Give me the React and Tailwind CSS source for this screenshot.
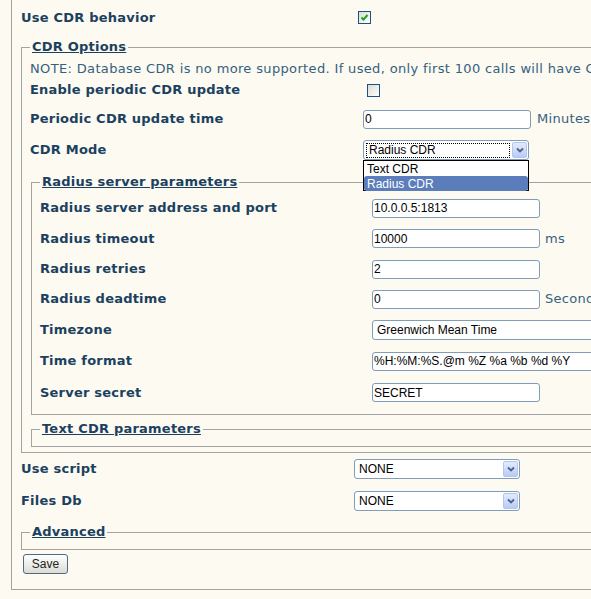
import React from "react";

const lbl = "font-bold text-[13px] tracking-[0.22px] text-[#1b4160]";
const unit = "text-[13px] tracking-[0.3px] text-[#35617f] whitespace-nowrap";

function Check({ checked }) {
  return (
    <span className="flex w-[13px] h-[13px] items-center justify-center border border-[#1c5180] bg-gradient-to-br from-[#dcdcd4] to-white">
      {checked && (
        <svg width="9" height="9" viewBox="0 0 9 9">
          <path d="M1.5 4.5 L3.5 6.5 L7.5 2" fill="none" stroke="#21a121" strokeWidth="2" />
        </svg>
      )}
    </span>
  );
}

function Input({ value, w = "w-[168px]" }) {
  return (
    <input
      readOnly
      defaultValue={value}
      className={`${w} h-[19px] rounded-[3px] border border-[#7f9db9] bg-white pl-[1px] text-[12px] text-black font-['Liberation_Sans',sans-serif] outline-none`}
    />
  );
}

function Select({ value, w = "w-[166px]", focused, children }) {
  return (
    <div className={`relative flex h-[20px] ${w} shrink-0 items-center rounded-[3px] border border-[#7f9db9] bg-white font-['Liberation_Sans',sans-serif] text-[12px] text-black`}>
      {focused ? (
        <span className="ml-[2px] mr-[2px] flex h-[15px] flex-1 items-center border border-dotted border-black pl-[2px]">
          {value}
        </span>
      ) : (
        <span className="flex-1 pl-[4px]">{value}</span>
      )}
      <span className="mr-[1px] flex h-[16px] w-[15px] items-center justify-center rounded-[2px] border border-[#b3c6ee] bg-gradient-to-b from-[#e3ebfd] to-[#b9cbf5]">
        <svg width="8" height="6" viewBox="0 0 8 6">
          <path d="M1 1.5 L4 4.5 L7 1.5" fill="none" stroke="#4d6185" strokeWidth="1.8" />
        </svg>
      </span>
      {children}
    </div>
  );
}

function Legend({ children }) {
  return (
    <legend className={`px-[2px] leading-[16px] underline ${lbl}`}>{children}</legend>
  );
}

function Row({ h, lw, label, children }) {
  return (
    <div className={`flex items-center ${h}`}>
      <div className={`${lw} shrink-0 ${lbl}`}>{label}</div>
      <div className="flex items-center">{children}</div>
    </div>
  );
}

export default function App() {
  return (
    <div className="h-[599px] w-[591px] overflow-hidden bg-[#fcfaf1] font-['DejaVu_Sans',sans-serif]">
      <div className="ml-[11px] w-[800px] border-b border-l border-[#a3a3a3] pb-[14px] pl-[9px] pt-[4px]">
        <Row h="h-[27px]" lw="w-[337px]" label="Use CDR behavior">
          <Check checked />
        </Row>

        {/* CDR Options */}
        <fieldset className="mt-[8px] border border-[#a3a3a3] pb-[5px] pl-[8px]">
          <Legend>CDR Options</Legend>
          <div className="pt-[6px]">
            <div className="whitespace-nowrap text-[13px] leading-[16px] tracking-[0.35px] text-[#35617f]">
              NOTE: Database CDR is no more supported. If used, only first 100 calls will have CDR records.
            </div>
            <Row h="h-[26px]" lw="w-[333px]" label="Enable periodic CDR update">
              <span className="ml-[4px]">
                <Check />
              </span>
            </Row>
            <Row h="h-[32px]" lw="w-[333px]" label="Periodic CDR update time">
              <Input value="0" />
              <span className={`ml-[6px] ${unit}`}>Minutes</span>
            </Row>
            <Row h="h-[30px]" lw="w-[333px]" label="CDR Mode">
              <Select value="Radius CDR" focused>
                <div className="absolute left-[-1px] top-[19px] z-10 h-[31px] w-[166px] border border-black bg-white text-[12px] leading-[14px]">
                  <div className="h-[15px] pl-[3px] pt-[1px]">Text CDR</div>
                  <div className="h-[15px] rounded-[3px] bg-[#5b7dbc] pl-[3px] pt-[1px] text-white">Radius CDR</div>
                </div>
              </Select>
            </Row>

            {/* Radius server parameters */}
            <fieldset className="ml-[1px] mt-[9px] border border-[#a3a3a3] pb-[6px] pl-[8px]">
              <Legend>Radius server parameters</Legend>
              <div className="pt-[3px]">
                <Row h="h-[30px]" lw="w-[332px]" label="Radius server address and port">
                  <Input value="10.0.0.5:1813" />
                </Row>
                <Row h="h-[31px]" lw="w-[332px]" label="Radius timeout">
                  <Input value="10000" />
                  <span className={`ml-[5px] ${unit}`}>ms</span>
                </Row>
                <Row h="h-[30px]" lw="w-[332px]" label="Radius retries">
                  <Input value="2" />
                </Row>
                <Row h="h-[30px]" lw="w-[332px]" label="Radius deadtime">
                  <Input value="0" />
                  <span className={`ml-[5px] ${unit}`}>Seconds</span>
                </Row>
                <Row h="h-[31px]" lw="w-[332px]" label="Timezone">
                  <Select value="Greenwich Mean Time" w="w-[260px]" />
                </Row>
                <Row h="h-[32px]" lw="w-[332px]" label="Time format">
                  <Input value="%H:%M:%S.@m %Z %a %b %d %Y" w="w-[260px]" />
                </Row>
                <Row h="h-[31px]" lw="w-[332px]" label="Server secret">
                  <Input value="SECRET" />
                </Row>
              </div>
            </fieldset>

            {/* Text CDR parameters */}
            <fieldset className="ml-[1px] mt-[6px] border border-[#a3a3a3] pb-[9px] pl-[8px]">
              <Legend>Text CDR parameters</Legend>
            </fieldset>
          </div>
        </fieldset>

        <Row h="h-[32px]" lw="w-[333px]" label="Use script">
          <Select value="NONE" />
        </Row>
        <Row h="h-[32px]" lw="w-[333px]" label="Files Db">
          <Select value="NONE" />
        </Row>

        {/* Advanced */}
        <fieldset className="mt-[7px] border border-[#a3a3a3] pb-[9px] pl-[8px]">
          <Legend>Advanced</Legend>
        </fieldset>

        <button className="ml-[2px] mt-[4px] h-[20px] w-[45px] rounded-[3px] border border-[#4a6b8a] bg-gradient-to-b from-white to-[#dcdcd4] font-['Liberation_Sans',sans-serif] text-[12px] text-[#222]">
          Save
        </button>
      </div>
    </div>
  );
}
